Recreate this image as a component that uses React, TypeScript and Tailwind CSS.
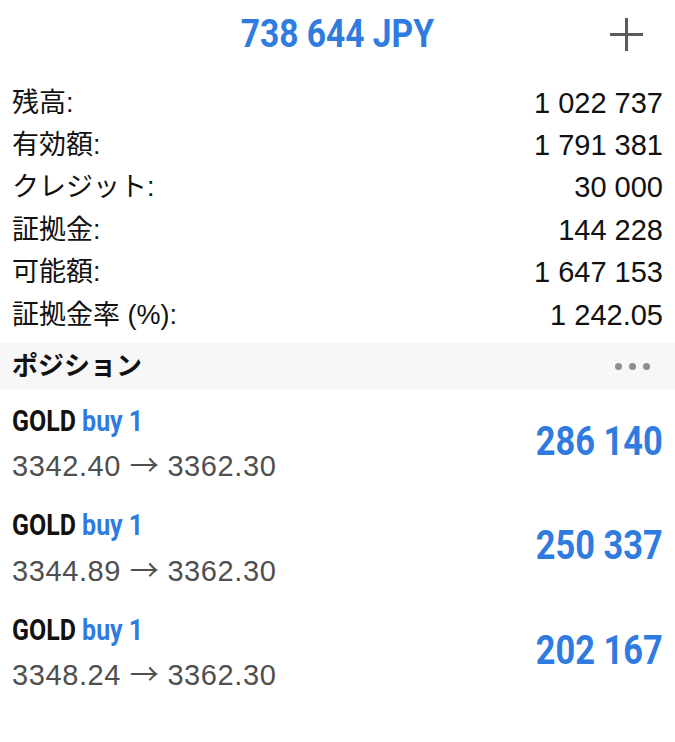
const cond = "inline-block font-['Roboto',sans-serif] font-bold scale-x-[0.86]";

const stats = [
  { label: "残高:", value: "1 022 737" },
  { label: "有効額:", value: "1 791 381" },
  { label: "クレジット:", value: "30 000" },
  { label: "証拠金:", value: "144 228" },
  { label: "可能額:", value: "1 647 153" },
  { label: "証拠金率 (%):", value: "1 242.05" },
];

const positions = [
  { open: "3342.40", close: "3362.30", profit: "286 140" },
  { open: "3344.89", close: "3362.30", profit: "250 337" },
  { open: "3348.24", close: "3362.30", profit: "202 167" },
];

const App = () => {
  return (
    <div className="w-[675px] h-[742px] bg-white text-[#111] font-['Liberation_Sans','Noto_Sans_CJK_JP',sans-serif] overflow-hidden">
      {/* Header */}
      <div className="relative h-[68px] flex items-center justify-center">
        <span className={`${cond} origin-center text-[39px] leading-none text-[#2f7be0]`}>738 644 JPY</span>
        <svg className="absolute right-[32px] top-[18px]" width="33" height="33" viewBox="0 0 33 33">
          <path d="M16.5 0v33M0 16.5h33" stroke="#5a5a5a" strokeWidth="3" />
        </svg>
      </div>

      {/* Account summary */}
      <div className="pt-[14px] px-[12px]">
        {stats.map((s) => (
          <div key={s.label} className="h-[42.4px] flex items-center justify-between">
            <span className="text-[27px] leading-none">{s.label}</span>
            <span className="text-[29px] leading-none">{s.value}</span>
          </div>
        ))}
      </div>

      {/* Positions header */}
      <div className="mt-[7px] h-[46px] bg-[#f7f7f7] px-[12px] flex items-center justify-between">
        <span className="text-[26px] font-bold leading-none">ポジション</span>
        <div className="flex gap-[7px] pr-[13px]">
          <span className="w-[7px] h-[7px] rounded-full bg-[#8e8e8e]" />
          <span className="w-[7px] h-[7px] rounded-full bg-[#8e8e8e]" />
          <span className="w-[7px] h-[7px] rounded-full bg-[#8e8e8e]" />
        </div>
      </div>

      {/* Positions */}
      <div className="px-[12px]">
        {positions.map((p) => (
          <div key={p.open} className="h-[104.5px] flex items-center justify-between">
            <div className="flex flex-col pt-[6px]">
              <div className="h-[40px] flex items-center">
                <span className={`${cond} origin-left text-[29px] leading-none`}>
                  GOLD <span className="text-[#2f7be0]">buy 1</span>
                </span>
              </div>
              <div className="text-[29px] leading-[44px] tracking-[0.6px] text-[#4f4f4f]">
                {p.open} <span className="font-['Noto_Sans_CJK_JP',sans-serif] tracking-normal">→</span> {p.close}
              </div>
            </div>
            <span className={`${cond} origin-right text-[40px] leading-none text-[#2f7be0]`}>{p.profit}</span>
          </div>
        ))}
      </div>
    </div>
  );
};

export default App;
